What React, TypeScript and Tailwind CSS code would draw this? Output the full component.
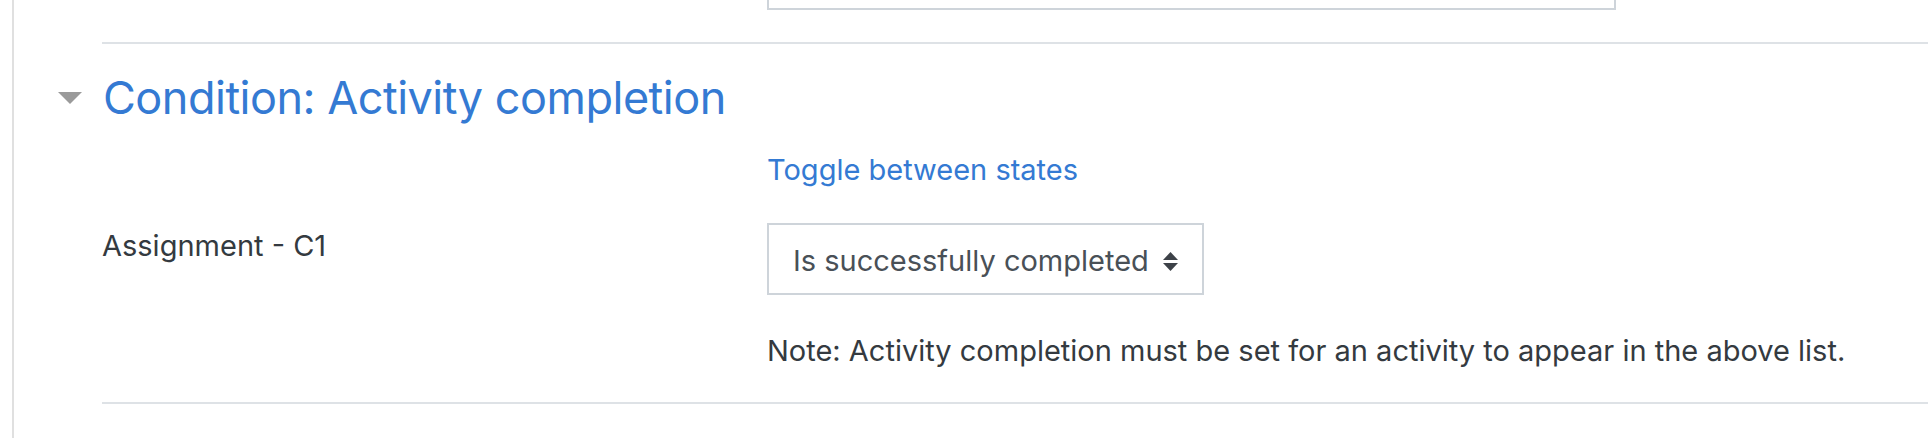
import React from "react";

export default function App() {
  return (
    <div
      className="h-[438px] w-full overflow-hidden bg-white pl-3"
      style={{ fontFamily: "Inter, 'Noto Sans', sans-serif" }}
    >
      <div className="h-full border-l-2 border-[#e0e0e0] pl-[88px]">
        {/* remnant of box above */}
        <div className="ml-[665px] h-[10px] w-[849px] border-x-2 border-b-2 border-[#ced4da]" />
        <div className="mt-[32px] h-[2px] bg-[#dee2e6]" />

        {/* Heading */}
        <div className="mt-[27px] flex items-center">
          <svg
            className="-ml-[44px] mr-[21px] shrink-0"
            width="24"
            height="12"
            viewBox="0 0 24 12"
          >
            <polygon points="0,0 24,0 12,12" fill="#9a9a9a" />
          </svg>
          <h3 className="text-[45px] leading-[1.2] tracking-[-0.5px] font-normal text-[#347ad3]">
            Condition: Activity completion
          </h3>
        </div>

        {/* Toggle link */}
        <div className="mt-[24px] pl-[665px]">
          <a className="text-[29px] leading-[42px] text-[#347ad3]">
            Toggle between states
          </a>
        </div>

        {/* Row */}
        <div className="mt-[32px] flex items-start">
          <div className="w-[665px] shrink-0 pt-[2px] text-[29px] leading-[42px] text-[#343a40]">
            Assignment - C1
          </div>
          <div className="flex flex-col">
            <div className="flex h-[72px] w-[437px] items-center border-2 border-[#ced4da] pl-[24px] pr-[24px] pt-[4px]">
              <span className="whitespace-nowrap text-[29px] leading-[42px] text-[#495057]">
                Is successfully completed
              </span>
              <svg
                className="ml-auto shrink-0"
                width="15"
                height="19"
                viewBox="0 0 15 19"
              >
                <polygon points="7.5,0 15,8 0,8" fill="#3d4248" />
                <polygon points="0,11 15,11 7.5,19" fill="#3d4248" />
              </svg>
            </div>
            <div className="mt-[35px] whitespace-nowrap text-[29px] leading-[42px] text-[#343a40]">
              Note: Activity completion must be set for an activity to appear in the above list.
            </div>
          </div>
        </div>

        <div className="mt-[30px] h-[2px] bg-[#dee2e6]" />
      </div>
    </div>
  );
}
